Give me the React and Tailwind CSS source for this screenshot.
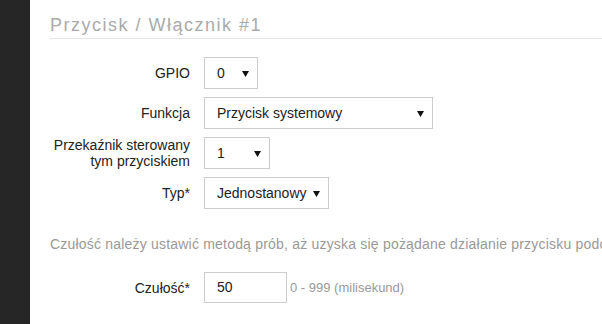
function Caret() {
  return (
    <svg width="7" height="7" viewBox="0 0 7 7" className="shrink-0">
      <path d="M0 1h7L3.5 7z" fill="#111" />
    </svg>
  );
}

function Select({ value, width }) {
  return (
    <div
      className={`flex h-[32px] shrink-0 items-center justify-between border border-[#cccccc] bg-white pl-[12px] pr-[8px] text-[14px] text-[#222] ${width}`}
    >
      <span>{value}</span>
      <Caret />
    </div>
  );
}

function Row({ label, children }) {
  return (
    <div className="flex items-center">
      <div className="w-[154px] shrink-0 pr-[14px] text-right text-[14px] leading-[16px] text-[#222] whitespace-nowrap">{label}</div>
      {children}
    </div>
  );
}

export default function App() {
  return (
    <div className="flex h-[324px] w-[602px] overflow-hidden bg-white" style={{ fontFamily: '"Liberation Sans", Arial, sans-serif' }}>
      <div className="w-[30px] shrink-0 bg-[#262626]" />
      <div className="min-w-0 flex-1 overflow-hidden pl-[20px]">
        <h2 className="border-b border-[#e5e5e5] pt-[15px] pb-[3px] text-[18px] leading-[20px] tracking-[1.5px] text-[#aaaaaa] whitespace-nowrap">
          Przycisk / Włącznik #1
        </h2>

        <div className="mt-[18px] flex flex-col gap-[8px]">
          <Row label="GPIO">
            <Select value="0" width="w-[54px]" />
          </Row>
          <Row label="Funkcja">
            <Select value="Przycisk systemowy" width="w-[229px]" />
          </Row>
          <Row label={<>Przekaźnik sterowany<br />tym przyciskiem</>}>
            <Select value="1" width="w-[66px]" />
          </Row>
          <Row label="Typ*">
            <Select value="Jednostanowy" width="w-[125px]" />
          </Row>
        </div>

        <p className="mt-[25px] whitespace-nowrap text-[14px] leading-[20px] tracking-[0.2px] text-[#999999]">
          Czułość należy ustawić metodą prób, aż uzyska się pożądane działanie przycisku podczas jego wciskania
        </p>

        <div className="mt-[18px]">
          <Row label="Czułość*">
            <div className="flex h-[31px] w-[83px] shrink-0 items-center border border-[#cccccc] pl-[12px] text-[14px] text-[#222]">50</div>
            <span className="pl-[3px] text-[13px] text-[#999999] whitespace-nowrap">0 - 999 (milisekund)</span>
          </Row>
        </div>
      </div>
    </div>
  );
}
